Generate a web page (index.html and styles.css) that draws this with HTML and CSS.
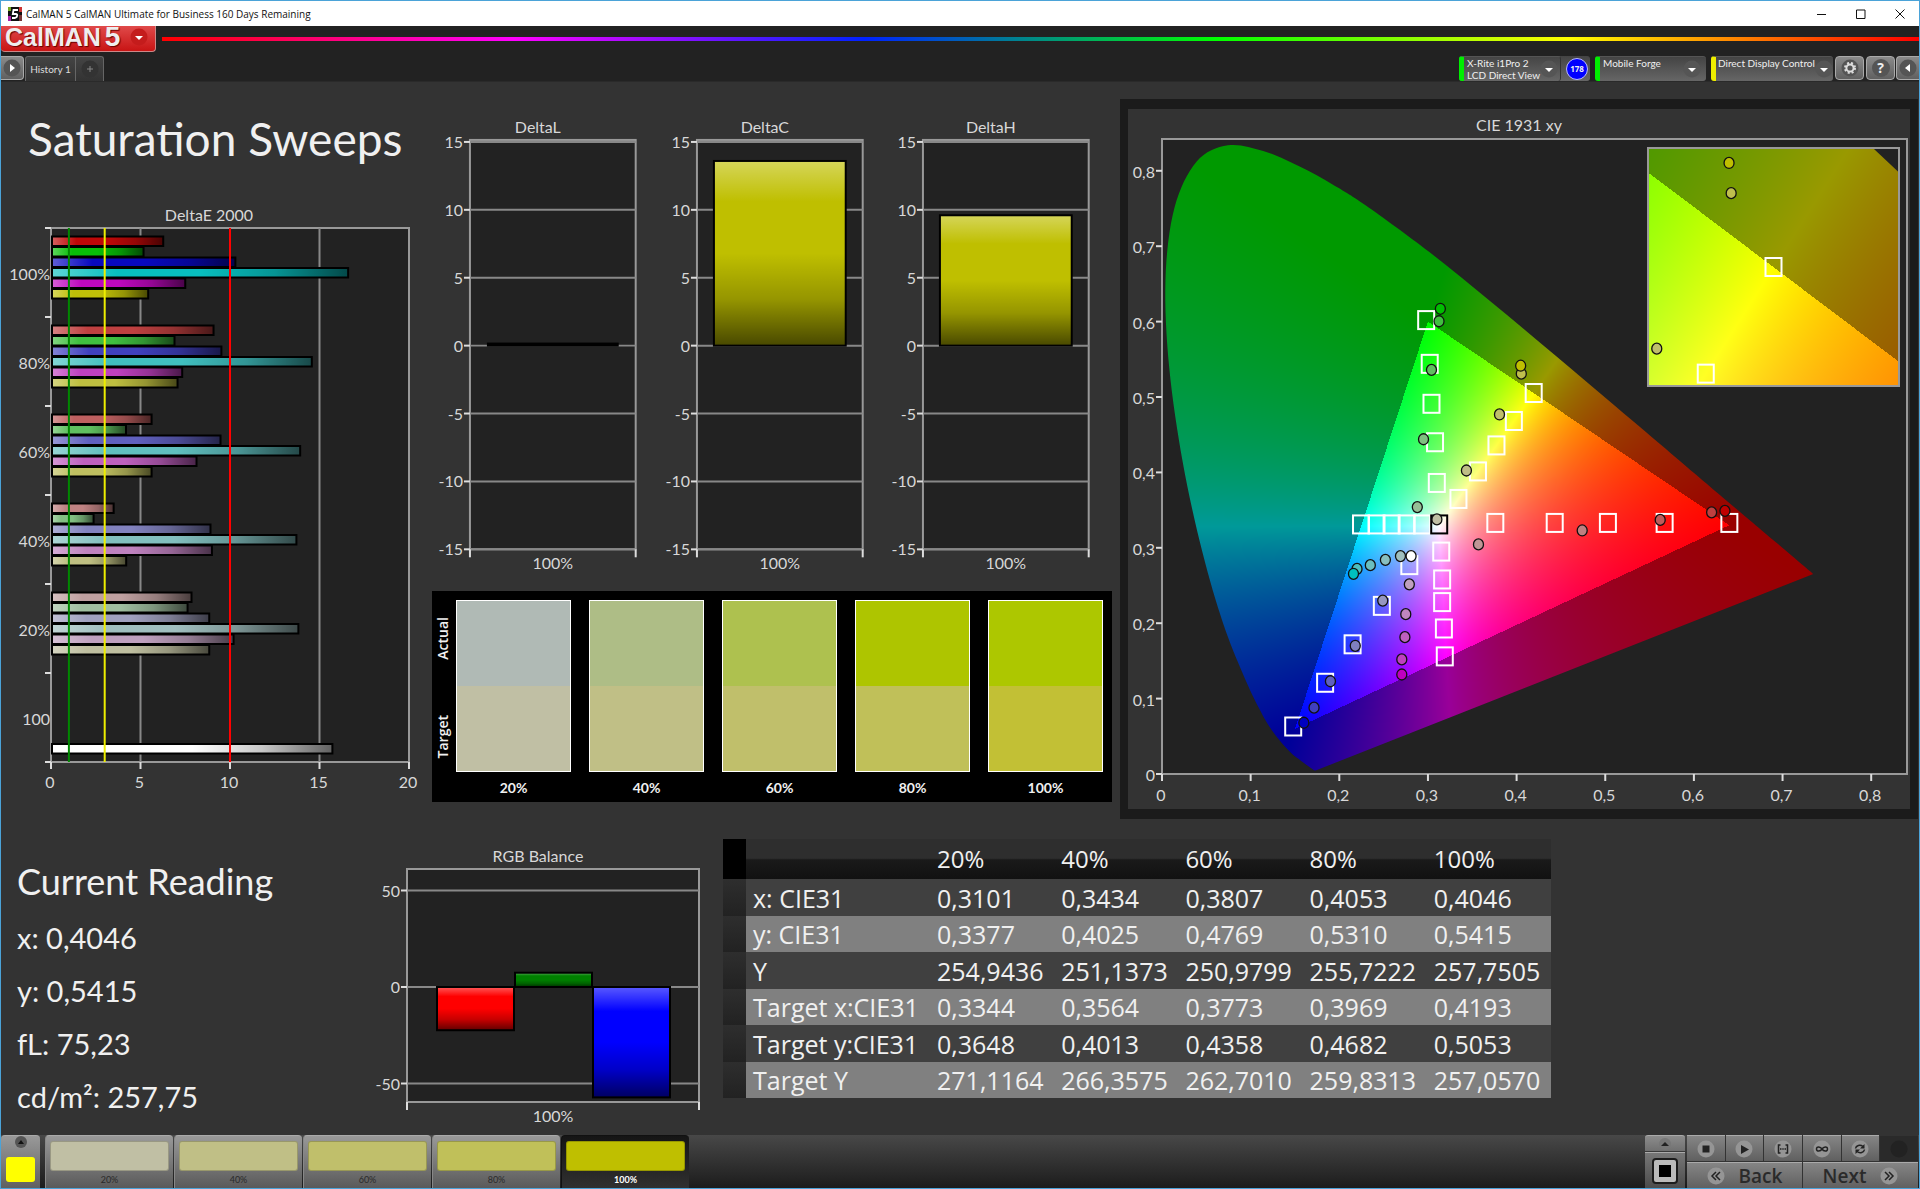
FILE: index.html
```html
<!DOCTYPE html>
<html lang="en">
<head>
    <meta charset="UTF-8">
    <meta name="viewport" content="width=device-width, initial-scale=1.0">
    <title>CalMAN 5 CalMAN Ultimate for Business</title>
    <link rel="stylesheet" href="styles.css">
</head>
<body>
    <header class="titlebar">
        <svg class="app-icon" viewBox="0 0 14 14">
            <rect width="14" height="14" fill="#111"/>
            <path d="M0 0h3v4H0z" fill="#7a2"/><path d="M0 9h3v5H0z" fill="#a2a"/><path d="M11 0h3v5h-3z" fill="#c33"/><path d="M11 8h3v6h-3z" fill="#733"/>
            <path d="M10 3H5.500l-.7 4h3q1.600 0 1.400 1.700T7 11H4" fill="none" stroke="#fff" stroke-width="1.800"/>
        </svg>
        <span class="titlebar-text">CalMAN 5 CalMAN Ultimate for Business 160 Days Remaining</span>
        <button class="win-btn" aria-label="Minimize"><svg viewBox="0 0 10 10"><path d="M0 5.500h9"/></svg></button>
        <button class="win-btn" aria-label="Maximize"><svg viewBox="0 0 10 10"><path d="M.5 1h8.500v8.500H.5z"/></svg></button>
        <button class="win-btn" aria-label="Close"><svg viewBox="0 0 10 10"><path d="M.5 .5l9 9M9.500 .5l-9 9"/></svg></button>
    </header>

    <div class="brand-row">
        <button class="logo" aria-label="CalMAN menu">
            <span>CalMAN</span><span class="version">5</span>
            <svg class="round red" viewBox="0 0 18 18"><circle cx="9" cy="9" r="8.500"/><path d="M5 8h8l-4 4z"/></svg>
        </button>
        <div class="rainbow"></div>
    </div>

    <nav class="tab-row">
        <button class="square-btn first" aria-label="Expand"><svg class="round" viewBox="0 0 18 18"><circle cx="9" cy="9" r="8.500"/><path d="M7 5v8l5-4z"/></svg></button>
        <button class="tab">History 1</button>
        <button class="tab add" aria-label="Add tab"><svg class="round dark" viewBox="0 0 18 18"><circle cx="9" cy="9" r="8.500"/><path class="line" d="M9 6v6M6 9h6"/></svg></button>
        <div class="spacer"></div>
        <div class="meter">
            <button class="device green"><span>X-Rite i1Pro 2<br>LCD Direct View</span><svg class="round" viewBox="0 0 18 18"><circle cx="9" cy="9" r="8.500"/><path d="M5 8h8l-4 4z"/></svg></button>
            <span class="count">178</span>
        </div>
        <button class="device green source"><span>Mobile Forge</span><svg class="round" viewBox="0 0 18 18"><circle cx="9" cy="9" r="8.500"/><path d="M5 8h8l-4 4z"/></svg></button>
        <button class="device yellow display"><span>Direct Display Control</span><svg class="round" viewBox="0 0 18 18"><circle cx="9" cy="9" r="8.500"/><path d="M5 8h8l-4 4z"/></svg></button>
        <button class="square-btn" aria-label="Settings"><svg class="round" viewBox="0 0 18 18"><circle cx="9" cy="9" r="8.500"/><circle class="gear-teeth" cx="9" cy="9" r="5"/><circle class="gear" cx="9" cy="9" r="3.600"/></svg></button>
        <button class="square-btn help" aria-label="Help"><b>?</b></button>
        <button class="square-btn last" aria-label="Collapse"><svg class="round" viewBox="0 0 18 18"><circle cx="9" cy="9" r="8.500"/><path d="M11 5v8L6 9z"/></svg></button>
    </nav>

    <main>
        <section class="top">
            <div class="sweeps">
                <h1>Saturation Sweeps</h1>
                <svg id="deltaE" viewBox="0 0 431 600"></svg>
            </div>
            <div class="middle">
                <div class="deltas">
                    <svg id="deltaL" viewBox="0 0 227 480"></svg>
                    <svg id="deltaC" viewBox="0 0 227 480"></svg>
                    <svg id="deltaH" viewBox="0 0 227 480"></svg>
                </div>
                <div class="swatches">
                    <div class="side"><span>Actual</span><span>Target</span></div>
                    <div class="pairs">
                        <figure><div class="actual a20"></div><div class="target t20"></div><figcaption>20%</figcaption></figure>
                        <figure><div class="actual a40"></div><div class="target t40"></div><figcaption>40%</figcaption></figure>
                        <figure><div class="actual a60"></div><div class="target t60"></div><figcaption>60%</figcaption></figure>
                        <figure><div class="actual a80"></div><div class="target t80"></div><figcaption>80%</figcaption></figure>
                        <figure><div class="actual a100"></div><div class="target t100"></div><figcaption>100%</figcaption></figure>
                    </div>
                </div>
            </div>
            <div class="cie-panel">
                <svg id="cie" viewBox="0 0 782 700"></svg>
            </div>
        </section>

        <section class="bottom">
            <div class="reading">
                <h2>Current Reading</h2>
                <p>x: 0,4046</p>
                <p>y: 0,5415</p>
                <p>fL: 75,23</p>
                <p>cd/m²: 257,75</p>
            </div>
            <svg id="rgb" viewBox="0 0 363 290"></svg>
            <table>
                <colgroup><col class="c-handle"><col class="c-name"><col><col><col><col><col></colgroup>
                <thead>
                    <tr><th class="handle"></th><th></th><th>20%</th><th>40%</th><th>60%</th><th>80%</th><th>100%</th></tr>
                </thead>
                <tbody>
                    <tr><td class="handle"></td><td>x: CIE31</td><td>0,3101</td><td>0,3434</td><td>0,3807</td><td>0,4053</td><td>0,4046</td></tr>
                    <tr><td class="handle"></td><td>y: CIE31</td><td>0,3377</td><td>0,4025</td><td>0,4769</td><td>0,5310</td><td>0,5415</td></tr>
                    <tr><td class="handle"></td><td>Y</td><td>254,9436</td><td>251,1373</td><td>250,9799</td><td>255,7222</td><td>257,7505</td></tr>
                    <tr><td class="handle"></td><td>Target x:CIE31</td><td>0,3344</td><td>0,3564</td><td>0,3773</td><td>0,3969</td><td>0,4193</td></tr>
                    <tr><td class="handle"></td><td>Target y:CIE31</td><td>0,3648</td><td>0,4013</td><td>0,4358</td><td>0,4682</td><td>0,5053</td></tr>
                    <tr><td class="handle"></td><td>Target Y</td><td>271,1164</td><td>266,3575</td><td>262,7010</td><td>259,8313</td><td>257,0570</td></tr>
                </tbody>
            </table>
        </section>
    </main>

    <footer>
        <button class="current" aria-label="Current colour">
            <svg viewBox="0 0 12 12"><circle cx="6" cy="6" r="6" fill="#555"/><path d="M3 8h6L6 4z" fill="#111"/></svg>
            <span></span>
        </button>
        <button class="level"><span class="t20"></span>20%</button>
        <button class="level"><span class="t40"></span>40%</button>
        <button class="level"><span class="t60"></span>60%</button>
        <button class="level"><span class="t80"></span>80%</button>
        <button class="level selected"><span class="pure"></span>100%</button>
        <div class="spacer"></div>
        <div class="pattern">
            <button class="pattern-up" aria-label="Show patterns"><svg viewBox="0 0 12 12"><circle cx="6" cy="6" r="6" fill="#777"/><path d="M2 8h8L6 4z" fill="#222"/></svg></button>
            <button class="pattern-window" aria-label="Window pattern"><span></span></button>
        </div>
        <div class="controls">
            <button aria-label="Stop"><svg viewBox="0 0 18 18"><circle cx="9" cy="9" r="8.500"/><path d="M5.500 5.500h7v7h-7z"/></svg></button>
            <button aria-label="Play"><svg viewBox="0 0 18 18"><circle cx="9" cy="9" r="8.500"/><path d="M6 5v9l8-4.500z"/></svg></button>
            <button aria-label="Read series"><svg viewBox="0 0 18 18"><circle cx="9" cy="9" r="8.500"/><path class="line" d="M6.500 5H4.500v8h2M11.500 5h2v8h-2M6 9h1.500M8.300 9h1.400M10.500 9H12"/></svg></button>
            <button aria-label="Continuous"><svg viewBox="0 0 18 18"><circle cx="9" cy="9" r="8.500"/><path class="line" d="M9 9C7.500 6.500 3.500 6 3.500 9s4 2.500 5.500 0 5.500-3 5.500 0-4 2.500-5.500 0z"/></svg></button>
            <button aria-label="Refresh"><svg viewBox="0 0 18 18"><circle cx="9" cy="9" r="8.500"/><path class="line" d="M4.500 8.500C5 5.500 9 4 12 6.500M13.500 9.500C13 12.500 9 14 6 11.500"/><path d="M13.500 4v4.500H9zM4.500 14V9.500H9z"/></svg></button>
            <button class="off" aria-label="Idle"><svg viewBox="0 0 18 18"><circle cx="9" cy="9" r="8.500"/></svg></button>
            <button class="wide"><svg viewBox="0 0 18 18"><circle cx="9" cy="9" r="8.500"/><path class="line" d="M9 5L5 9l4 4M13 5L9 9l4 4"/></svg>Back</button>
            <button class="wide">Next<svg viewBox="0 0 18 18"><circle cx="9" cy="9" r="8.500"/><path class="line" d="M5 5l4 4-4 4M9 5l4 4-4 4"/></svg></button>
        </div>
    </footer>

    <script src="charts.js"></script>
</body>
</html>
```
FILE: styles.css
```css
* {
    box-sizing: border-box;
}
body {
    margin: 0;
    min-height: 100vh;
    display: flex;
    flex-direction: column;
    border: 1px solid #4ba3d8;
    background: #333;
    color: #f0f0f0;
    font-family: Lato, "Open Sans", sans-serif;
}
button {
    margin: 0;
    padding: 0;
    border: none;
    background: none;
    color: inherit;
    font-family: inherit;
    cursor: pointer;
}
svg {
    display: block;
}
.spacer {
    flex: 1;
}

/* window title */
.titlebar {
    display: flex;
    align-items: center;
    height: 25px;
    background: #fff;
    color: #111;
    font: 10px/24px "Open Sans", sans-serif;
}
.app-icon {
    width: 14px;
    height: 14px;
    margin: 0 4px 0 7px;
}
.titlebar-text {
    flex: 1;
}
.win-btn {
    width: 39px;
    height: 24px;
    display: flex;
    align-items: center;
    justify-content: center;
}
.win-btn svg {
    width: 10px;
    height: 10px;
    fill: none;
    stroke: #111;
    stroke-width: 1;
}

/* logo and rainbow */
.brand-row {
    display: flex;
    height: 30px;
    background: #222;
}
.logo {
    display: flex;
    align-items: center;
    gap: 4px;
    width: 155px;
    height: 26px;
    padding: 0 0 3px 4px;
    border: 1px solid #c88;
    border-width: 0 1px 1px 0;
    border-radius: 0 0 4px 4px;
    background: linear-gradient(#e04a4a, #c81414);
    color: #eee;
    font: bold 25px/22px "Liberation Sans", sans-serif;
    text-shadow: 1px 1px 1px #600;
}
.version {
    font-size: 28px;
}
.logo .round {
    margin-left: 6px;
}
.rainbow {
    flex: 1;
    height: 4px;
    margin: 11px 0 0 6px;
    background: linear-gradient(90deg, #f00, #f0f 20%, #02f 40%, #0f0 60%, #ff0 80%, #f00);
}
.round {
    width: 18px;
    height: 18px;
    flex: none;
}
.round circle {
    fill: #555;
}
.round path {
    fill: #fff;
}
.round.red circle {
    fill: #c41c1c;
}
.round.dark circle {
    fill: #333;
}
.round .line {
    fill: none;
    stroke: #888;
}
.round .gear {
    fill: none;
    stroke: #ddd;
    stroke-width: 2;
}
.round .gear-teeth {
    fill: none;
    stroke: #ddd;
    stroke-width: 2;
    stroke-dasharray: 2 2;
}

/* tabs and devices */
.tab-row {
    display: flex;
    height: 26px;
    background: #222;
    border-bottom: 1px solid #2a2a2a;
}
.square-btn {
    width: 29px;
    height: 24px;
    margin-left: 2px;
    display: flex;
    align-items: center;
    justify-content: center;
    border: 1px solid #aaa;
    border-radius: 4px;
    background: linear-gradient(#8a8a8a, #606060);
}
.square-btn.first {
    width: 23px;
    margin: 0 1px 0 0;
    border-left: none;
    border-radius: 0 4px 4px 0;
}
.square-btn.last {
    width: 23px;
    margin-left: 1px;
    border-right: none;
    border-radius: 4px 0 0 4px;
}
.help b {
    width: 18px;
    border-radius: 9px;
    background: #555;
    font: bold 14px/18px "Open Sans", sans-serif;
}
.tab {
    width: 51px;
    border: 1px solid #666;
    border-bottom: none;
    border-radius: 3px 0 0 0;
    background: linear-gradient(#444, #333);
    color: #ddd;
    font-size: 10px;
    white-space: nowrap;
}
.tab.add {
    width: 28px;
    display: flex;
    align-items: center;
    justify-content: center;
    border-left: none;
    border-radius: 0 3px 0 0;
}
.meter {
    display: flex;
    align-items: center;
    width: 131px;
    margin-right: 5px;
    border-radius: 3px;
    background: linear-gradient(#444, #666);
}
.device {
    display: flex;
    align-items: center;
    justify-content: space-between;
    height: 25px;
    padding: 0 5px 0 3px;
    border-left: 5px solid #0e0;
    border-top: 1px solid #555;
    border-radius: 3px;
    background: linear-gradient(#444, #666);
    font-size: 10px;
    line-height: 12px;
    text-align: left;
    white-space: nowrap;
}
.device span {
    align-self: flex-start;
}
.device.yellow {
    border-left-color: #ee0;
}
.meter .device {
    width: 102px;
    padding-right: 7px;
    border-right: 1px solid #333;
    background: none;
}
.source {
    width: 111px;
    margin-right: 5px;
}
.display {
    width: 122px;
    padding: 0 3px 0 2px;
}
.count {
    flex: none;
    width: 22px;
    margin-left: 5px;
    border: 1px solid #bbf;
    border-radius: 50%;
    background: #00f;
    font: bold 8px/20px "Open Sans", sans-serif;
    text-align: center;
}

/* work area */
main {
    flex: 1;
}
.top {
    display: grid;
    grid-template-columns: 431fr 688fr 799fr;
    align-items: start;
    padding-top: 17px;
}
.top svg {
    width: 100%;
}
h1 {
    margin: 0;
    padding: 10px 0 0 27px;
    height: 101px;
    font-size: 46px;
    font-weight: normal;
    line-height: 60px;
    white-space: nowrap;
}
.middle {
    padding: 1px 8px 0 0;
}
.deltas {
    display: grid;
    grid-template-columns: repeat(3, 1fr);
}
.swatches {
    display: grid;
    grid-template-columns: 20px 1fr;
    margin-top: 12px;
    padding: 9px 9px 2px 4px;
    background: #000;
}
.pairs {
    display: grid;
    grid-template-columns: repeat(5, 1fr);
    column-gap: 18px;
}
.side {
    display: flex;
    flex-direction: column;
    justify-content: space-between;
    width: 14px;
    height: 172px;
    padding: 17px 0 14px;
    font: 600 14px/14px "Open Sans", sans-serif;
}
.side span {
    writing-mode: vertical-rl;
    transform: rotate(180deg);
}
figure {
    margin: 0;
    text-align: center;
}
.actual, .target {
    height: 86px;
    border: 1px solid #fff;
}
.actual {
    border-bottom: none;
}
.target {
    border-top: none;
}
figcaption {
    padding-top: 4px;
    font-size: 14px;
    font-weight: bold;
    line-height: 24px;
}
.a20 { background: #b0bab5; }
.a40 { background: #aebd86; }
.a60 { background: #aec14f; }
.a80 { background: #aec500; }
.a100 { background: #adc700; }
.t20 { background: #c0bfa4; }
.t40 { background: #c0bf86; }
.t60 { background: #c0bf6b; }
.t80 { background: #c0c059; }
.target.t100 { background: #c2c035; }
.pure { background: #bfbf00; }
.cie-panel {
    margin: 0 1px 0 0;
    padding: 10px 8px;
    background: #1b1b1b;
}
.cie-panel svg {
    background: #333;
}

/* chart parts */
text {
    fill: #d8d8d8;
    font-size: 16px;
}
.plot {
    fill: #222;
    stroke: #999;
    stroke-width: 2;
}
.grid {
    stroke: #888;
    stroke-width: 2;
}
.tick {
    stroke: #ddd;
    stroke-width: 2;
}
.bar {
    stroke: #000;
    stroke-width: 2;
}

/* readings */
.bottom {
    display: grid;
    grid-template-columns: 359fr 363fr 828fr 368fr;
    align-items: start;
    margin-top: 20px;
}
.reading {
    padding-left: 16px;
    white-space: nowrap;
}
h2 {
    margin: 0;
    padding-top: 19px;
    font-size: 36px;
    font-weight: normal;
    line-height: 47px;
}
.reading p {
    margin: 0;
    padding-top: 13px;
    font-size: 29px;
    line-height: 40px;
}
#rgb {
    width: 100%;
}
table {
    width: 100%;
    border-collapse: collapse;
    table-layout: fixed;
    font: 25px/36px "Open Sans", sans-serif;
    text-align: left;
}
.c-handle {
    width: 23px;
}
.c-name {
    width: 184px;
}
th, td {
    padding: 0 0 0 7px;
    font-weight: normal;
    white-space: nowrap;
}
thead tr {
    height: 40px;
    font-size: 24px;
    background: linear-gradient(#2e2e2e 48%, #1a1a1a 52%, #111);
}
th.handle {
    background: #000;
}
tbody tr {
    background: #808080;
}
tbody tr:nth-child(odd) {
    height: 37px;
    background: #404040;
}
td.handle {
    background: linear-gradient(#2e2e2e, #222);
}

/* bottom bar */
footer {
    display: flex;
    height: 53px;
    padding-right: 1px;
    background: linear-gradient(#484848, #1c1c1c);
}
.current {
    width: 39px;
    margin-right: 5px;
    border-top: 1px solid #aaa;
    border-radius: 4px 4px 0 0;
    background: linear-gradient(#999, #606060);
    display: flex;
    flex-direction: column;
    align-items: center;
    gap: 9px;
}
.current svg, .pattern-up svg {
    width: 12px;
    height: 12px;
}
.current span {
    width: 29px;
    height: 25px;
    border-radius: 3px;
    background: #ff0;
}
.level {
    width: 128px;
    margin-right: 1px;
    padding: 5px 4px 0;
    border-top: 1px solid #aaa;
    border-left: 1px solid #888;
    border-radius: 4px 4px 0 0;
    background: linear-gradient(#999, #5a5a5a);
    color: #2a2a2a;
    font-size: 9px;
    line-height: 16px;
    display: flex;
    flex-direction: column;
    align-items: stretch;
    gap: 1px;
}
.level span {
    height: 31px;
    border: 1px solid #0003;
    border-radius: 3px;
}
.level.selected {
    border-color: #111;
    background: linear-gradient(#151515, #303030);
    color: #fff;
    font-weight: bold;
}
.pattern {
    width: 40px;
    margin-right: 2px;
    display: flex;
    flex-direction: column;
    gap: 1px;
}
.pattern button {
    display: flex;
    align-items: center;
    justify-content: center;
    border-top: 1px solid #aaa;
    background: linear-gradient(#8c8c8c, #707070);
}
.pattern-up {
    height: 16px;
    border-radius: 3px 3px 0 0;
}
.pattern .pattern-window {
    flex: 1;
    background: linear-gradient(#777, #4c4c4c);
}
.pattern-window span {
    width: 26px;
    height: 26px;
    border: 2px solid #1c1c1c;
    border-radius: 4px;
    background: linear-gradient(#000, #000) center / 12px 12px no-repeat #bbb;
}
.controls {
    width: 231px;
    display: grid;
    grid-template-columns: repeat(6, 1fr);
    grid-template-rows: 26px 26px;
    gap: 1px;
    background: #333;
}
.controls button {
    display: flex;
    align-items: center;
    justify-content: center;
    border-top: 1px solid #aaa;
    background: linear-gradient(#858585, #606060);
    color: #2a2a2a;
}
.controls svg {
    width: 18px;
    height: 18px;
}
.controls circle {
    fill: #959595;
}
.controls path {
    fill: #222;
}
.controls .line {
    fill: none;
    stroke: #222;
    stroke-width: 1.5;
}
.controls .off {
    border-top-color: #333;
    background: #2a2a2a;
}
.controls .off circle {
    fill: #222;
}
.controls .wide {
    grid-column: span 3;
    gap: 14px;
    font: 600 19px/22px "Open Sans", sans-serif;
}
```
FILE: charts.js
```js
const NS = "http://www.w3.org/2000/svg";

function add(parent, name, attrs, text) {
    const el = document.createElementNS(NS, name);
    for (const key in attrs) el.setAttribute(key, attrs[key]);
    if (text !== undefined) el.textContent = text;
    parent.appendChild(el);
    return el;
}

function line(svg, cls, x1, y1, x2, y2) {
    return add(svg, "line", { class: cls, x1, y1, x2, y2 });
}

function label(svg, x, y, text, anchor) {
    add(svg, "text", { x, y, "text-anchor": anchor || "middle" }, text);
}

// light at the start, dark at the end, laid over a flat bar
function addShine(svg, id, x2, y2) {
    const g = add(svg, "linearGradient", { id, x1: 0, y1: 0, x2, y2 });
    [[0, "#fff", .35], [.22, "#fff", 0], [.5, "#000", 0], [.75, "#000", .22], [1, "#000", .62]].forEach(s =>
        add(g, "stop", { offset: s[0], "stop-color": s[1], "stop-opacity": s[2] }));
}

function bar(svg, shine, color, x, y, width, height) {
    add(svg, "rect", { x, y, width, height, fill: color });
    add(svg, "rect", { class: "bar", x, y, width, height, fill: "url(#" + shine + ")" });
}

// DeltaE 2000
function drawDeltaE() {
    const svg = document.getElementById("deltaE");
    const left = 50, right = 408, top = 28, bottom = 562;
    const unit = (right - left) / 20, cat = (bottom - top) / 6;
    const groups = [
        ["100%", 8, [6.27, 5.17, 10.3, 16.6, 7.5, 5.43]],
        ["80%", 64, [9.08, 6.9, 9.52, 14.57, 7.33, 7.07]],
        ["60%", 96, [5.62, 4.19, 9.47, 13.92, 8.13, 5.62]],
        ["40%", 130, [3.5, 2.38, 8.91, 13.71, 8.99, 4.2]],
        ["20%", 160, [7.85, 7.63, 8.84, 13.82, 10.2, 8.84]],
        ["100", 0, []]
    ];
    const hues = [[1, 0, 0], [0, 1, 0], [0, 0, 1], [0, 1, 1], [1, 0, 1], [1, 1, 0]];
    addShine(svg, "shineX", 1, 0);
    label(svg, 208, 21, "DeltaE 2000");
    add(svg, "rect", { class: "plot", x: left, y: top, width: right - left, height: bottom - top });
    for (let v = 0; v <= 20; v += 5) {
        const x = left + v * unit;
        if (v > 0 && v < 20) line(svg, "grid", x, top, x, bottom);
        line(svg, "tick", x, bottom, x, bottom + 7);
        label(svg, x - 1, bottom + 26, v);
    }
    groups.forEach(([name, low, values], k) => {
        const y0 = top + k * cat;
        line(svg, "tick", left - 6, y0, left, y0);
        label(svg, left - 1, y0 + cat / 2 + 7, name, "end");
        values.forEach((v, i) => {
            const color = "rgb(" + hues[i].map(c => c ? 191 : low).join() + ")";
            bar(svg, "shineX", color, left + 1, y0 + 8.5 + i * 10.5, v * unit - 1, 9.5);
        });
    });
    bar(svg, "shineX", "#fff", left + 1, bottom - 18, 15.72 * unit - 1, 9.5);
    line(svg, "tick", left - 6, bottom, left, bottom);
    [[1, "#080"], [3, "#ee0"], [10, "#f00"]].forEach(([v, stroke]) =>
        line(svg, "tick", left + v * unit, top, left + v * unit, bottom).style.stroke = stroke);
}

// vertical bar chart of one level
function drawColumns(id, title, o, bars) {
    const svg = document.getElementById(id);
    const zero = o.zero;
    addShine(svg, id + "Shine", 0, 1);
    label(svg, o.titleX, o.top - 7, title);
    add(svg, "rect", { class: "plot", x: o.left, y: o.top, width: o.right - o.left, height: o.bottom - o.top });
    for (let v = o.max; v >= -o.max; v -= o.step) {
        const y = zero - v * o.unit;
        line(svg, "grid", o.left, y, o.right, y);
        line(svg, "tick", o.left - 6, y, o.left, y);
        label(svg, o.left - 7, y + 6, v, "end");
    }
    line(svg, "tick", o.left, o.bottom, o.left, o.bottom + 8);
    line(svg, "tick", o.right, o.bottom, o.right, o.bottom + 8);
    label(svg, (o.left + o.right) / 2, o.bottom + 20, "100%");
    bars.forEach(([value, color, x, width]) => {
        const h = Math.abs(value) * o.unit;
        bar(svg, id + "Shine", color, x, value > 0 ? zero - h : zero, width, h);
    });
}

// CIE 1931 xy
const LOCUS = [
    [.1741, .005], [.1733, .0048], [.1714, .0051], [.1644, .0109], [.1566, .0177], [.144, .0297],
    [.1241, .0578], [.1096, .0868], [.0913, .1327], [.0687, .2007], [.0454, .295], [.0235, .4127],
    [.0082, .5384], [.0039, .6548], [.0139, .7502], [.0389, .812], [.0743, .8338], [.1142, .8262],
    [.1547, .8059], [.1929, .7816], [.2296, .7543], [.3016, .6923], [.3731, .6245], [.4441, .5547],
    [.5125, .4866], [.5752, .4242], [.627, .3725], [.6658, .334], [.6915, .3083], [.719, .2809], [.7347, .2653]
];
const TARGETS = [
    [.64, .333], [.567, .333], [.503, .333], [.443, .333], [.376, .333],
    [.298, .602], [.302, .544], [.304, .491], [.308, .44], [.31, .386],
    [.148, .063], [.184, .121], [.215, .172], [.248, .223], [.279, .277],
    [.2245, .331], [.242, .331], [.259, .331], [.276, .331], [.2935, .331],
    [.319, .156], [.318, .193], [.316, .228], [.316, .258], [.315, .295],
    [.4193, .5053], [.3969, .4682], [.3773, .4358], [.3564, .4013], [.3344, .3648]
];
const ACTUALS = [
    [.357, .3045, "#bf9696"], [.474, .323, "#bf8080"], [.562, .337, "#bf5a5a"], [.62, .347, "#bf4040"], [.635, .349, "#bf0000"],
    [.288, .354, "#96bf96"], [.295, .444, "#80bf80"], [.304, .536, "#60bf60"], [.3125, .6005, "#40bf40"], [.314, .617, "#00bf00"],
    [.249, .23, "#9696bf"], [.218, .17, "#8080bf"], [.19, .123, "#6060bf"], [.1715, .088, "#4040bf"], [.16, .068, "#0000bf"],
    [.269, .289, "#a0bfbf"], [.252, .284, "#88bfbf"], [.235, .277, "#6bbfbf"], [.22, .272, "#4ebfbf"], [.216, .2655, "#00bfbf"],
    [.279, .2515, "#bfa0bf"], [.275, .212, "#bf86bf"], [.274, .1815, "#bf60bf"], [.2705, .152, "#bf40bf"], [.2705, .132, "#bf00bf"],
    [.3101, .3377, "#bfbfa4"], [.3434, .4025, "#bfbf86"], [.3807, .4769, "#bfbf6b"], [.4053, .531, "#bfbf4e"], [.4046, .5415, "#bfbf00"],
    [.281, .289, "#fff"]
];

function inGamut(x, y) {
    const t = [[.64, .33], [.3, .6], [.15, .06]];
    return t.every((a, i) => {
        const b = t[(i + 1) % 3];
        return (b[0] - a[0]) * (y - a[1]) - (b[1] - a[1]) * (x - a[0]) >= 0;
    });
}

// linear rgb, brightest channel at full, dimmed outside the gamut
function xyToRgb(x, y) {
    const X = x / y, Z = (1 - x - y) / y;
    const lin = [
        3.2406 * X - 1.5372 - .4986 * Z,
        -.9689 * X + 1.8758 + .0415 * Z,
        .0557 * X - .204 + 1.057 * Z
    ].map(c => Math.max(c, 0));
    const max = Math.max(...lin), scale = inGamut(x, y) ? 255 : 153;
    return lin.map(c => scale * c / max);
}

// path through the locus points, smoothed with Catmull-Rom segments
function traceLocus(ctx, px, py) {
    const p = LOCUS.map(([x, y]) => [px(x), py(y)]);
    ctx.beginPath();
    ctx.moveTo(p[0][0], p[0][1]);
    for (let i = 0; i < p.length - 1; i++) {
        const a = p[i - 1] || p[i], b = p[i], c = p[i + 1], d = p[i + 2] || c;
        ctx.bezierCurveTo(b[0] + (c[0] - a[0]) / 6, b[1] + (c[1] - a[1]) / 6,
            c[0] - (d[0] - b[0]) / 6, c[1] - (d[1] - b[1]) / 6, c[0], c[1]);
    }
    ctx.closePath();
}

// view: plot box in svg units and the xy range it shows
function drawGamut(svg, v) {
    const holder = add(svg, "foreignObject", { x: v.left, y: v.top, width: v.width, height: v.height });
    const canvas = document.createElement("canvas");
    const paint = document.createElement("canvas");
    canvas.width = paint.width = v.width;
    canvas.height = paint.height = v.height;
    canvas.style.display = "block";
    const sx = (v.x1 - v.x0) / v.width, sy = (v.y1 - v.y0) / v.height;
    const pctx = paint.getContext("2d");
    const img = pctx.createImageData(v.width, v.height);
    for (let j = 0; j < v.height; j++) {
        for (let i = 0; i < v.width; i++) {
            const rgb = xyToRgb(v.x0 + (i + .5) * sx, v.y1 - (j + .5) * sy);
            const k = (j * v.width + i) * 4;
            img.data[k] = rgb[0];
            img.data[k + 1] = rgb[1];
            img.data[k + 2] = rgb[2];
            img.data[k + 3] = 255;
        }
    }
    pctx.putImageData(img, 0, 0);
    const ctx = canvas.getContext("2d");
    traceLocus(ctx, x => (x - v.x0) / sx, y => (v.y1 - y) / sy);
    ctx.clip();
    ctx.drawImage(paint, 0, 0);
    holder.appendChild(canvas);
}

function drawPoints(svg, v) {
    const px = x => v.left + (x - v.x0) / (v.x1 - v.x0) * v.width;
    const py = y => v.top + (v.y1 - y) / (v.y1 - v.y0) * v.height;
    const seen = ([x, y]) => x > v.x0 && x < v.x1 && y > v.y0 && y < v.y1;
    const square = ([x, y], stroke) => add(svg, "rect", {
        x: px(x) - 8, y: py(y) - 9, width: 16, height: 18, fill: "none", stroke, "stroke-width": 2
    });
    TARGETS.filter(seen).forEach(p => square(p, "#fff"));
    if (seen([.3127, .331])) square([.3127, .331], "#000");
    ACTUALS.filter(seen).forEach(p => add(svg, "ellipse", {
        cx: px(p[0]), cy: py(p[1]), rx: 5, ry: 5.5, fill: p[2], stroke: "#111", "stroke-width": 1.3
    }));
}

function drawCie() {
    const svg = document.getElementById("cie");
    const view = { left: 34, top: 30, width: 745, height: 635, x0: 0, x1: .8404, y0: 0, y1: .8422 };
    const inset = { left: 520, top: 39, width: 251, height: 238, x0: .3778, x1: .4608, y0: .4639, y1: .5467 };
    const bottom = view.top + view.height;
    label(svg, 391, 22, "CIE 1931 xy");
    add(svg, "rect", { class: "plot", x: view.left, y: view.top, width: view.width, height: view.height });
    for (let i = 0; i <= 8; i++) {
        const name = i ? "0," + i : "0";
        const x = view.left + i * 88.65, y = bottom - i * 75.4;
        line(svg, "tick", x, bottom, x, bottom + 7);
        line(svg, "tick", view.left - 6, y, view.left, y);
        label(svg, x - 1, bottom + 27, name);
        label(svg, view.left - 7, y + 7, name, "end");
    }
    drawGamut(svg, view);
    drawPoints(svg, view);
    add(svg, "rect", { class: "plot", x: inset.left, y: inset.top, width: inset.width, height: inset.height });
    drawGamut(svg, inset);
    add(svg, "rect", { class: "plot", x: inset.left, y: inset.top, width: inset.width, height: inset.height, style: "fill:none" });
    drawPoints(svg, inset);
}

drawDeltaE();
const delta = { left: 38, right: 204, top: 40, bottom: 450, zero: 246, unit: 13.6, max: 15, step: 5, titleX: 106 };
drawColumns("deltaL", "DeltaL", delta, [[.15, "#000", 56, 130]]);
drawColumns("deltaC", "DeltaC", delta, [[13.6, "#bfbf00", 55, 132]]);
drawColumns("deltaH", "DeltaH", delta, [[9.6, "#bfbf00", 55, 132]]);
drawColumns("rgb", "RGB Balance",
    { left: 47, right: 339, top: 30, bottom: 263, zero: 148, unit: 1.93, max: 50, step: 50, titleX: 178 },
    [[-22.4, "#f00", 77, 77], [7.4, "#008000", 155, 77], [-57.2, "#00f", 233, 77]]);
drawCie();
```
